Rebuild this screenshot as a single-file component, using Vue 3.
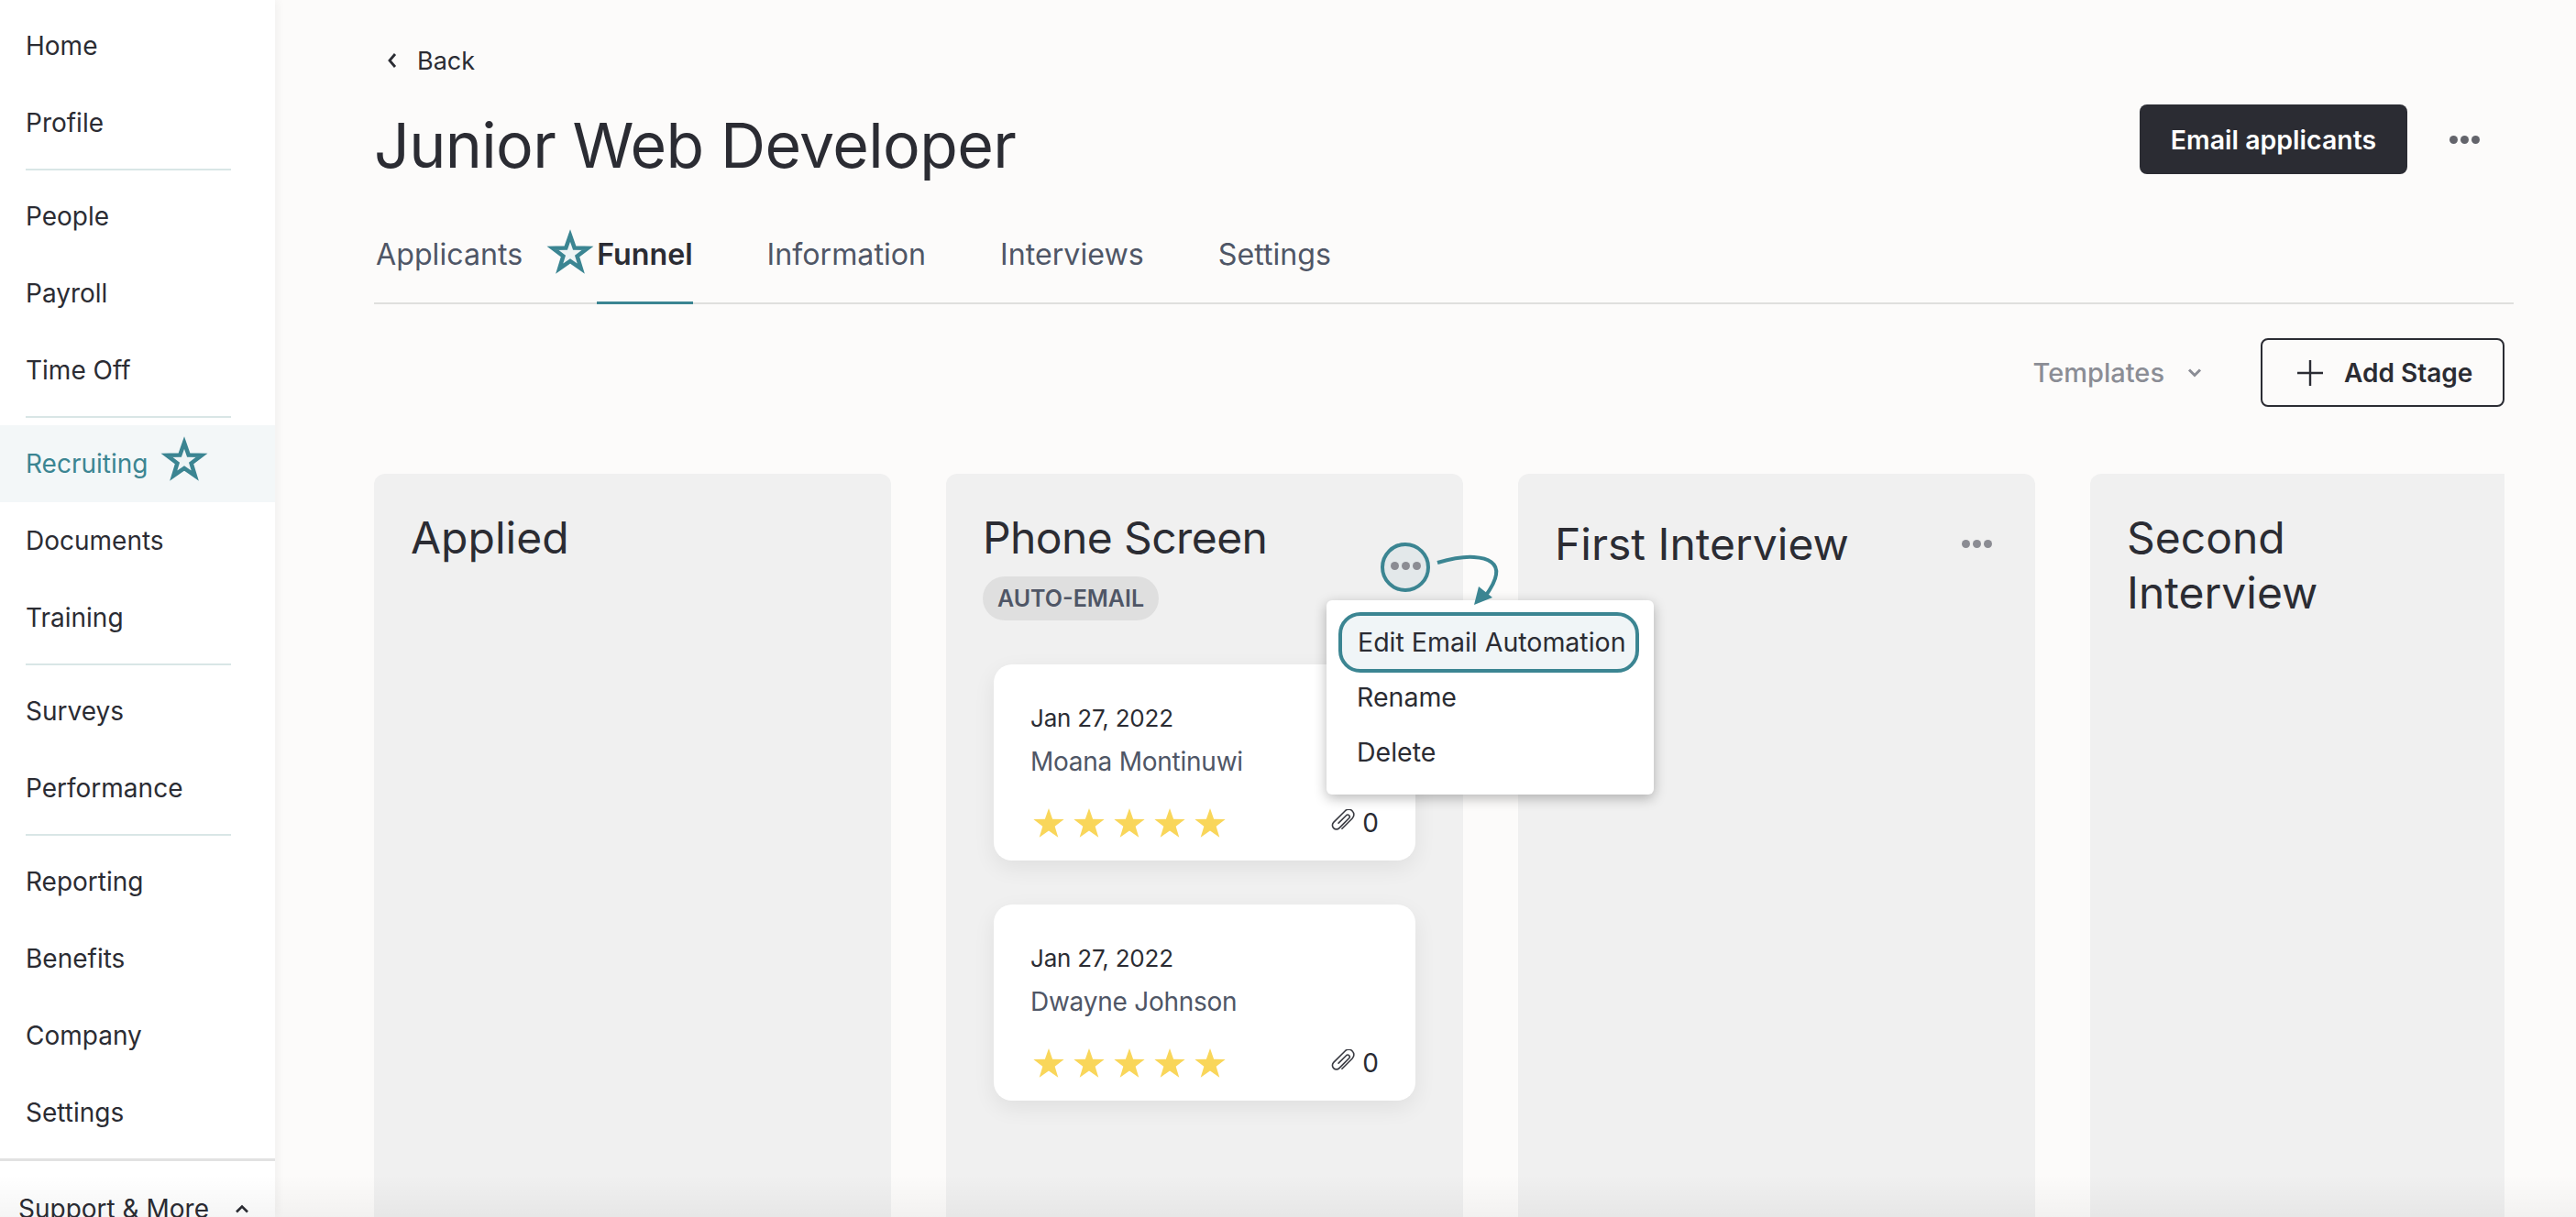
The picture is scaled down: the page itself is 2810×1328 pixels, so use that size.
<template>
  <div class="app">
    <aside class="sidebar">
      <nav class="nav">
        <template v-for="(group, i) in navGroups" :key="i">
          <div v-if="i > 0" class="nav-divider"></div>
          <a
            v-for="item in group"
            :key="item"
            class="nav-item"
            :class="{ active: item === 'Recruiting' }"
          >
            {{ item }}
            <svg v-if="item === 'Recruiting'" class="nav-star" width="50" height="47" viewBox="0 0 50 47">
              <polygon :points="outlineStar" fill="#eef4f5" stroke="#3b8592" stroke-width="4.5" stroke-miterlimit="10" />
            </svg>
          </a>
        </template>
      </nav>
      <div class="support">
        <span>Support &amp; More</span>
        <svg width="16" height="10" viewBox="0 0 16 10" fill="none" stroke="#2b2c33" stroke-width="2.6">
          <path d="M2 8.5 8 2.5l6 6" />
        </svg>
      </div>
    </aside>

    <main class="main">
      <a class="back">
        <svg width="14" height="20" viewBox="0 0 14 20" fill="none" stroke="#2b2c33" stroke-width="2.8">
          <path d="M10 3 4 10l6 7" />
        </svg>
        Back
      </a>

      <header class="page-head">
        <h1>Junior Web Developer</h1>
        <div class="head-actions">
          <button class="btn-dark">Email applicants</button>
          <span class="dots dots-lg"><i></i><i></i><i></i></span>
        </div>
      </header>

      <div class="tabs">
        <a v-for="tab in tabs" :key="tab" class="tab" :class="{ current: tab === 'Funnel' }">
          {{ tab }}
          <svg v-if="tab === 'Funnel'" class="tab-star" width="50" height="47" viewBox="0 0 50 47">
            <polygon :points="outlineStar" fill="#eef4f5" stroke="#3b8592" stroke-width="4.5" stroke-miterlimit="10" />
          </svg>
        </a>
      </div>

      <div class="toolbar">
        <span class="templates">
          Templates
          <svg width="18" height="11" viewBox="0 0 18 11" fill="none" stroke="#8b8d95" stroke-width="3">
            <path d="M3 2.5 9 8.5 15 2.5" />
          </svg>
        </span>
        <button class="btn-outline">
          <svg width="28" height="28" viewBox="0 0 28 28" stroke="#2b2c33" stroke-width="2.4">
            <path d="M0 14h28M14 0v28" />
          </svg>
          Add Stage
        </button>
      </div>

      <section class="board">
        <div class="column">
          <h2>Applied</h2>
        </div>

        <div class="column phone">
          <h2>Phone Screen</h2>
          <span class="badge">AUTO-EMAIL</span>

          <article v-for="person in people" :key="person" class="card">
            <div class="card-date">Jan 27, 2022</div>
            <div class="card-name">{{ person }}</div>
            <div class="card-foot">
              <div class="stars">
                <svg v-for="n in 5" :key="n" width="44" height="32" viewBox="0 0 44 32">
                  <polygon fill="#f9d65a" points="22,0 26.11,11.84 38.64,12.09 28.66,19.66 32.29,31.66 22,24.5 11.71,31.66 15.34,19.66 5.36,12.09 17.89,11.84" />
                </svg>
              </div>
              <div class="attach">
                <svg width="26" height="26" viewBox="0 0 24 24" fill="none" stroke="#3a3b42" stroke-width="1.5" stroke-linecap="round">
                  <path d="M7.5 14 15.5 6A2 2 0 0 1 18.3 8.8L8.2 19A4 4 0 0 1 2.5 13.3L14 1.8A5.2 5.2 0 0 1 21.4 9.2L11 19.6" />
                </svg>
                0
              </div>
            </div>
          </article>

          <span class="focus-ring"><span class="dots"><i></i><i></i><i></i></span></span>
          <svg class="arrow" width="80" height="64" viewBox="0 0 80 64" fill="none">
            <path d="M4 13C18 9 32 6 44 7 60 8 70 14 68 26 67 34 61 43 56 50" stroke="#3b8592" stroke-width="4" />
            <polygon points="44,59 49,39 64,51" fill="#3b8592" />
          </svg>

          <ul class="menu">
            <li class="selected">Edit Email Automation</li>
            <li>Rename</li>
            <li>Delete</li>
          </ul>
        </div>

        <div class="column first">
          <div class="col-head">
            <h2>First Interview</h2>
            <span class="dots"><i></i><i></i><i></i></span>
          </div>
        </div>

        <div class="column">
          <h2>Second<br />Interview</h2>
        </div>
      </section>
    </main>

    <div class="bottom-fade"></div>
  </div>
</template>

<script setup>
const navGroups = [
  ['Home', 'Profile'],
  ['People', 'Payroll', 'Time Off'],
  ['Recruiting', 'Documents', 'Training'],
  ['Surveys', 'Performance'],
  ['Reporting', 'Benefits', 'Company', 'Settings'],
]

const tabs = ['Applicants', 'Funnel', 'Information', 'Interviews', 'Settings']
const people = ['Moana Montinuwi', 'Dwayne Johnson']

const outlineStar = '25,6 29.7,19.5 44,19.8 32.6,28.5 36.8,42.2 25,34 13.2,42.2 17.4,28.5 6,19.8 20.3,19.5'
</script>

<style>
body {
  margin: 0;
  background: #fcfbfa;
}
</style>

<style scoped>
.app {
  position: relative;
  display: flex;
  width: 2810px;
  height: 1328px;
  overflow: hidden;
  background: #fcfbfa;
  color: #2b2c33;
  font-family: Inter, "Liberation Sans", sans-serif;
}

.sidebar {
  width: 300px;
  flex-shrink: 0;
  background: #fff;
  box-shadow: 2px 0 10px rgba(0, 0, 0, 0.05);
  padding-top: 8px;
  box-sizing: border-box;
}

.nav-item {
  display: flex;
  align-items: center;
  height: 84px;
  padding-left: 28px;
  font-size: 28px;
}

.nav-item.active {
  background: #f3f7f8;
  color: #3b8592;
}

.nav-star {
  margin-left: 15px;
  margin-top: -11px;
  overflow: visible;
}

.nav-divider {
  height: 2px;
  margin: 8px 48px 8px 28px;
  background: #d9e6e6;
}

.support {
  display: flex;
  align-items: center;
  gap: 28px;
  margin-top: 8px;
  padding: 32px 0 0 20px;
  border-top: 3px solid #e2e2e2;
  font-size: 28px;
  line-height: 40px;
}

.main {
  flex: 1;
  min-width: 0;
  padding: 46px 68px 0 108px;
}

.back {
  display: flex;
  align-items: center;
  gap: 20px;
  height: 40px;
  padding-left: 13px;
  font-size: 27px;
}

.page-head {
  display: flex;
  justify-content: space-between;
  margin-top: 28px;
}

h1 {
  margin: 0;
  font-size: 68px;
  line-height: 88px;
  font-weight: 400;
  letter-spacing: -0.65px;
}

.head-actions {
  display: flex;
  align-items: center;
  gap: 46px;
  height: 76px;
  padding-right: 37px;
}

.btn-dark {
  width: 292px;
  height: 76px;
  border: 0;
  border-radius: 8px;
  background: #2b2c33;
  color: #fff;
  font: 600 28.5px Inter, "Liberation Sans", sans-serif;
}

.dots {
  display: inline-flex;
  gap: 3px;
}

.dots i {
  width: 9px;
  height: 9px;
  border-radius: 50%;
  background: #8b8c93;
}

.dots-lg i {
  background: #63646b;
}

.tabs {
  display: flex;
  gap: 81px;
  margin-top: 56px;
  padding-left: 2px;
  border-bottom: 2px solid #dfdfdd;
}

.tab {
  position: relative;
  height: 40px;
  padding-bottom: 34px;
  margin-bottom: -2px;
  line-height: 40px;
  font-size: 32.2px;
  color: #4f5666;
}

.tab.current {
  color: #2b2c33;
  font-weight: 600;
  border-bottom: 3px solid #3b8592;
  padding-bottom: 31px;
}

.tab-star {
  position: absolute;
  left: -54px;
  top: -7px;
  overflow: visible;
}

.toolbar {
  display: flex;
  justify-content: flex-end;
  align-items: center;
  gap: 63px;
  margin: 37px 10px 0 0;
}

.templates {
  display: flex;
  align-items: center;
  gap: 24px;
  font-size: 29px;
  font-weight: 500;
  color: #8b8d95;
}

.btn-outline {
  display: flex;
  align-items: center;
  gap: 23px;
  width: 266px;
  height: 75px;
  padding: 0 0 0 38px;
  box-sizing: border-box;
  border: 2.5px solid #2b2c33;
  border-radius: 8px;
  background: transparent;
  color: #2b2c33;
  font: 600 28px Inter, "Liberation Sans", sans-serif;
}

.board {
  display: flex;
  gap: 60px;
  height: 812px;
  margin: 73px 10px 0 0;
  overflow: hidden;
}

.column {
  flex: 0 0 564px;
  box-sizing: border-box;
  padding: 40px 40px 0;
  border-radius: 12px 12px 0 0;
  background: #f0f0f0;
}

h2 {
  margin: 0;
  font-size: 48px;
  line-height: 60px;
  font-weight: 400;
}

.phone {
  position: relative;
}

.phone h2 {
  letter-spacing: -0.6px;
}

.badge {
  display: table;
  margin-top: 12px;
  padding: 0 16px;
  height: 48px;
  line-height: 48px;
  border-radius: 24px;
  background: #dfdfdf;
  color: #4f5666;
  font-size: 25px;
  font-weight: 600;
}

.card {
  width: 460px;
  height: 214px;
  box-sizing: border-box;
  margin: 48px 0 0 12px;
  padding: 41px 40px 0;
  border-radius: 20px;
  background: #fff;
  box-shadow: 0 8px 24px rgba(0, 0, 0, 0.07);
}

.card-date {
  font-size: 26px;
  line-height: 36px;
  letter-spacing: -0.2px;
}

.card-name {
  margin-top: 9px;
  font-size: 28px;
  line-height: 40px;
  letter-spacing: -0.25px;
  color: #4f5666;
}

.card-foot {
  display: flex;
  justify-content: space-between;
  align-items: center;
  margin-top: 30px;
}

.stars {
  display: flex;
  margin-left: -2px;
}

.attach {
  display: flex;
  align-items: center;
  gap: 8px;
  font-size: 28px;
}

.attach svg {
  margin-top: -4px;
}

.focus-ring {
  position: absolute;
  left: 474px;
  top: 75px;
  display: flex;
  align-items: center;
  justify-content: center;
  width: 54px;
  height: 54px;
  box-sizing: border-box;
  border: 4px solid #3b8592;
  border-radius: 50%;
  background: #e3e8ea;
}

.focus-ring .dots {
  margin-top: -4px;
}

.arrow {
  position: absolute;
  left: 532px;
  top: 84px;
  z-index: 2;
}

.menu {
  position: absolute;
  left: 415px;
  top: 138px;
  z-index: 1;
  width: 357px;
  height: 212px;
  box-sizing: border-box;
  margin: 0;
  padding: 13px 0 0;
  list-style: none;
  border-radius: 6px;
  background: #fff;
  box-shadow: 0 4px 14px rgba(0, 0, 0, 0.28);
  font-size: 28.5px;
}

.menu li {
  height: 60px;
  line-height: 59px;
  padding-left: 33px;
}

.menu li.selected {
  width: 328px;
  height: 66px;
  line-height: 58px;
  box-sizing: border-box;
  margin: 0 0 -3px 13px;
  padding-left: 17px;
  border: 4px solid #3b8592;
  border-radius: 24px;
  background: #f0f5f7;
  white-space: nowrap;
}

.first {
  padding-top: 47px;
}

.col-head {
  display: flex;
  justify-content: space-between;
  align-items: center;
  padding-right: 7px;
}

.col-head .dots {
  margin-top: -2px;
}

.bottom-fade {
  position: absolute;
  left: 0;
  right: 0;
  bottom: 0;
  height: 46px;
  background: linear-gradient(rgba(0, 0, 0, 0), rgba(0, 0, 0, 0.04));
  pointer-events: none;
}
</style>
